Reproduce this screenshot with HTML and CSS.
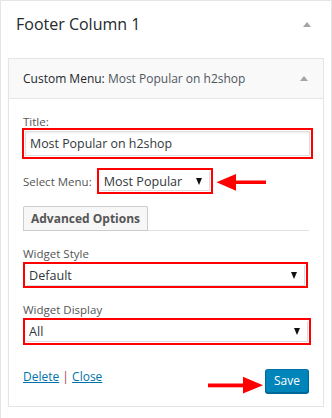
FILE: index.html
```html
<!DOCTYPE html>
<html lang="en">
<head>
<meta charset="utf-8">
<title>Footer Column 1</title>
<link rel="stylesheet" href="styles.css">
</head>
<body>
<div class="sidebar">
  <div class="sidebar-head">
    <h2 class="sidebar-title">Footer Column 1</h2>
    <span class="toggle"></span>
  </div>
  <div class="widget">
    <div class="widget-top">
      <h3 class="widget-title">Custom Menu: <span class="in-title">Most Popular on h2shop</span></h3>
      <span class="toggle"></span>
    </div>
    <div class="widget-inside">
      <label class="field-label">Title:</label>
      <div class="mark mark-title">
        <div class="text-input">Most Popular on h2shop</div>
      </div>
      <div class="menu-row">
        <span class="row-label">Select Menu:</span>
        <div class="mark mark-menu">
          <div class="select select-menu"><span>Most Popular</span><span class="caret"></span></div>
        </div>
      </div>
      <div class="adv-wrap">
        <button class="adv-btn" type="button">Advanced Options</button>
      </div>
      <label class="field-label label-style">Widget Style</label>
      <div class="mark mark-style">
        <div class="select select-wide"><span>Default</span><span class="caret"></span></div>
      </div>
      <label class="field-label label-display">Widget Display</label>
      <div class="mark mark-display">
        <div class="select select-wide"><span>All</span><span class="caret"></span></div>
      </div>
      <div class="actions">
        <div class="links"><a href="#" class="link">Delete</a> <span class="sep">|</span> <a href="#" class="link">Close</a></div>
        <button class="save-btn" type="button">Save</button>
      </div>
    </div>
  </div>
  <svg class="arrows" width="332" height="418" viewBox="0 0 332 418" aria-hidden="true">
    <rect x="234" y="180.5" width="32" height="3.5" fill="#f00"/>
    <polygon points="216.5,182.3 236,174 236,190.7" fill="#f00"/>
    <rect x="208" y="383.5" width="37" height="3.8" fill="#f00"/>
    <polygon points="263,385.3 243,376.7 243,393.5" fill="#f00"/>
  </svg>
</div>
</body>
</html>
```

FILE: styles.css
```css
* { box-sizing: border-box; }
html, body { margin: 0; padding: 0; background: #fff; }
body {
  font-family: "Open Sans", "Noto Sans", "Liberation Sans", sans-serif;
  color: #444;
  width: 332px;
  height: 418px;
  overflow: hidden;
}
.sidebar {
  position: relative;
  width: 332px;
  height: 430px;
  border: 1px solid #e5e5e5;
  padding: 0 7px;
  background: #fff;
}
.sidebar-head {
  height: 57px;
  display: flex;
  align-items: center;
  justify-content: space-between;
  padding: 0 13px 11px 8px;
}
.sidebar-title {
  margin: 0;
  font-size: 16px;
  font-weight: 400;
  color: #23282d;
  line-height: 20px;
}
.toggle {
  width: 0;
  height: 0;
  border-left: 4px solid transparent;
  border-right: 4px solid transparent;
  border-bottom: 5px solid #a0a5aa;
}
.widget {
  border: 1px solid #e5e5e5;
  background: #fff;
}
.widget-top {
  height: 40px;
  background: #f9f9f9;
  border-bottom: 1px solid #e5e5e5;
  display: flex;
  align-items: center;
  justify-content: space-between;
  padding: 0 15px 0 14px;
}
.widget-title {
  margin: 0;
  font-size: 12px;
  font-weight: 400;
  color: #23282d;
  line-height: 16px;
}
.in-title { color: #50575e; }
.widget-inside {
  padding: 16px 14px 13px 14px;
}
.field-label {
  display: block;
  font-size: 11.5px;
  line-height: 13px;
  color: #555;
}
.mark {
  border: 2px solid #f00;
  padding: 1px;
}
.mark-title {
  margin-left: -1px;
  width: 291px;
  height: 31px;
}
.text-input {
  height: 25px;
  border: 1px solid #ddd;
  box-shadow: inset 0 1px 2px rgba(0,0,0,0.07);
  font-size: 12.4px;
  line-height: 23px;
  padding: 0 4px;
  color: #32373c;
  background: #fff;
}
.menu-row {
  display: flex;
  align-items: center;
  gap: 5px;
  margin-top: 9px;
}
.row-label {
  font-size: 11.5px;
  color: #555;
}
.mark-menu {
  width: 116px;
  height: 26px;
}
.select {
  height: 20px;
  display: flex;
  align-items: center;
  justify-content: space-between;
  border: 1px solid #ddd;
  border-top-color: #fff;
  border-left-color: #fff;
  background: #fff;
  font-size: 12.6px;
  color: #32373c;
  padding: 0 7px 0 2px;
}
.select-menu { padding-left: 3px; }
.caret {
  width: 0;
  height: 0;
  border-left: 3.5px solid transparent;
  border-right: 3.5px solid transparent;
  border-top: 7px solid #111;
}
.adv-wrap {
  margin-top: 12px;
  width: 286px;
  border-bottom: 1px solid #e1e1e1;
  display: flex;
}
.adv-btn {
  height: 24px;
  width: 125px;
  border: 1px solid #ccc;
  border-bottom: 0;
  border-radius: 2px 2px 0 0;
  background: #f7f7f7;
  font-family: inherit;
  font-weight: 700;
  font-size: 12px;
  color: #555;
  padding: 0;
  box-shadow: 0 1px 0 #ccc;
}
.label-style { margin-top: 16px; }
.mark-style {
  margin-top: 2px;
  width: 285px;
  height: 26px;
}
.label-display { margin-top: 15px; }
.mark-display {
  margin-top: 2px;
  width: 288px;
  height: 27px;
}
.select-wide { height: 21px; }
.actions {
  margin-top: 23px;
  width: 286px;
  display: flex;
  align-items: center;
  justify-content: space-between;
}
.links {
  font-size: 12px;
  color: #a04060;
  padding-bottom: 8px;
}
.link {
  color: #0073aa;
  text-decoration: underline;
}
.sep { color: #a04060; }
.save-btn {
  width: 44px;
  height: 24px;
  border: 1px solid #0073aa;
  border-color: #0073aa #006799 #006799;
  border-radius: 3px;
  background: #0085ba;
  color: #fff;
  font-family: inherit;
  font-size: 12px;
  padding: 0;
  box-shadow: 0 1px 0 #006799;
}
.arrows {
  position: absolute;
  left: -1px;
  top: -1px;
  pointer-events: none;
}
```
